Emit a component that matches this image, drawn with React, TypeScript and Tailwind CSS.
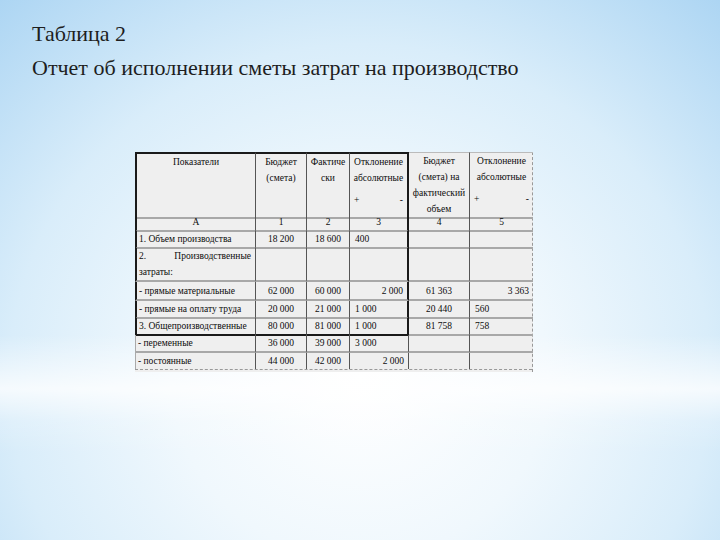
import React from "react";

type Align = "left" | "center" | "right";

interface RowData {
  label: React.ReactNode;
  cells: [string, string, string, Align, string, string, Align];
  h: string;
  last?: boolean;
  boxEnd?: boolean;
  outside?: boolean;
}

const cols = "grid grid-cols-[121px_51px_43px_59px_61px_63px]";

const rows: RowData[] = [
  { label: "1. Объем производства", cells: ["18 200", "18 600", "400", "left", "", "", "left"], h: "h-[17px]" },
  {
    label: (
      <div className="leading-[16px]">
        <div className="flex justify-between pr-[4px]">
          <span>2.</span>
          <span>Производственные</span>
        </div>
        <div>затраты:</div>
      </div>
    ),
    cells: ["", "", "", "left", "", "", "left"],
    h: "h-[34px]",
  },
  { label: "- прямые материальные", cells: ["62 000", "60 000", "2 000", "right", "61 363", "3 363", "right"], h: "h-[19px]" },
  { label: "- прямые на оплату труда", cells: ["20 000", "21 000", "1 000", "left", "20 440", "560", "left"], h: "h-[17px]" },
  { label: "3. Общепроизводственные", cells: ["80 000", "81 000", "1 000", "left", "81 758", "758", "left"], h: "h-[17px]", boxEnd: true },
  { label: "- переменные", cells: ["36 000", "39 000", "3 000", "left", "", "", "left"], h: "h-[18px]", outside: true },
  { label: "- постоянные", cells: ["44 000", "42 000", "2 000", "right", "", "", "left"], h: "h-[16px]", outside: true, last: true },
];

const alignCls: Record<Align, string> = {
  left: "justify-start pl-[5px]",
  center: "justify-center",
  right: "justify-end pr-[4px]",
};

function DataRow({ r }: { r: RowData }) {
  const [b, f, dev, devAlign, b2, dev2, dev2Align] = r.cells;
  const rowLine = r.last ? "" : "border-b-2 border-b-[#a8a8a8]";
  const boxBottom = r.boxEnd ? "border-b-2 border-b-[#1a1a1a]" : rowLine;
  const left = r.outside ? "border-l border-l-[#aaa]" : "border-l-2 border-l-[#1a1a1a]";
  return (
    <div className={`${cols} ${r.h}`}>
      <div className={`${left} ${boxBottom} border-r border-r-[#555] flex items-center pl-[2px]`}>
        {typeof r.label === "string" ? <span>{r.label}</span> : <div className="w-full">{r.label}</div>}
      </div>
      <div className={`${boxBottom} border-r border-r-[#555] flex items-center justify-center`}>{b}</div>
      <div className={`${boxBottom} border-r border-r-[#555] flex items-center justify-center`}>{f}</div>
      <div
        className={`${boxBottom} ${r.outside ? "border-r border-r-[#555]" : "border-r-2 border-r-[#1a1a1a]"} flex items-center ${alignCls[devAlign]}`}
      >
        {dev}
      </div>
      <div className={`${rowLine} border-r border-r-[#555] flex items-center justify-center`}>{b2}</div>
      <div className={`${rowLine} flex items-center ${alignCls[dev2Align]}`}>{dev2}</div>
    </div>
  );
}

function PlusMinus() {
  return (
    <div className="flex justify-between px-[4px]">
      <span>+</span>
      <span>-</span>
    </div>
  );
}

export default function App() {
  return (
    <div className="w-[720px] h-[540px] overflow-hidden bg-[radial-gradient(ellipse_75%_95%_at_50%_70%,#ffffff_0%,#f0f8fd_35%,#d9edfa_65%,#acd5f3_100%)]">
      <div className="h-full bg-[linear-gradient(to_bottom,#ffffff00_62%,#ffffffc0_72%,#ffffff30_78%,#ffffff00_84%)] font-['Liberation_Serif'] text-[#1e1e1e]">
        <div className="pl-[32px] pt-[21px]">
          <div className="text-[22px] leading-[26px]">Таблица 2</div>
          <div className="mt-[8px] text-[22px] leading-[26px]">
            Отчет об исполнении сметы затрат на производство
          </div>
        </div>

        <div className="ml-[135px] mt-[71px] w-[398px] bg-[#efefef] border-r border-dashed border-r-[#999] text-[9.5px] leading-[16px] text-[#0d0d0d]">
          {/* header */}
          <div className={`${cols} h-[62px]`}>
            <div className="border-t-2 border-l-2 border-[#1a1a1a] border-r border-r-[#555] border-b-2 border-b-[#a8a8a8] text-center">
              Показатели
            </div>
            <div className="border-t-2 border-t-[#1a1a1a] border-r border-r-[#555] border-b-2 border-b-[#a8a8a8] text-center">
              <div>Бюджет</div>
              <div>(смета)</div>
            </div>
            <div className="border-t-2 border-t-[#1a1a1a] border-r border-r-[#555] border-b-2 border-b-[#a8a8a8] text-center">
              <div>Фактиче</div>
              <div>ски</div>
            </div>
            <div className="border-t-2 border-t-[#1a1a1a] border-r-2 border-r-[#1a1a1a] border-b-2 border-b-[#a8a8a8] text-center">
              <div>Отклонение</div>
              <div>абсолютные</div>
              <div className="mt-[6px]">
                <PlusMinus />
              </div>
            </div>
            <div className="border-t border-t-[#bbb] border-r border-r-[#555] border-b-2 border-b-[#a8a8a8] text-center">
              <div>Бюджет</div>
              <div>(смета) на</div>
              <div>фактический</div>
              <div>объем</div>
            </div>
            <div className="border-t border-t-[#bbb] border-b-2 border-b-[#a8a8a8] text-center">
              <div>Отклонение</div>
              <div>абсолютные</div>
              <div className="mt-[6px]">
                <PlusMinus />
              </div>
            </div>
          </div>

          {/* column numbers */}
          <div className={`${cols} h-[17px]`}>
            {["А", "1", "2", "3", "4", "5"].map((t, i) => (
              <div
                key={t}
                className={`flex items-center justify-center border-b-2 border-b-[#a8a8a8] ${
                  i === 0 ? "border-l-2 border-l-[#1a1a1a]" : ""
                } ${i === 3 ? "border-r-2 border-r-[#1a1a1a]" : i < 5 ? "border-r border-r-[#555]" : ""}`}
              >
                {t}
              </div>
            ))}
          </div>

          {rows.map((r, i) => (
            <DataRow key={i} r={r} />
          ))}

          <div className="h-[3px] border-t border-dashed border-t-[#999]" />
        </div>
      </div>
    </div>
  );
}
